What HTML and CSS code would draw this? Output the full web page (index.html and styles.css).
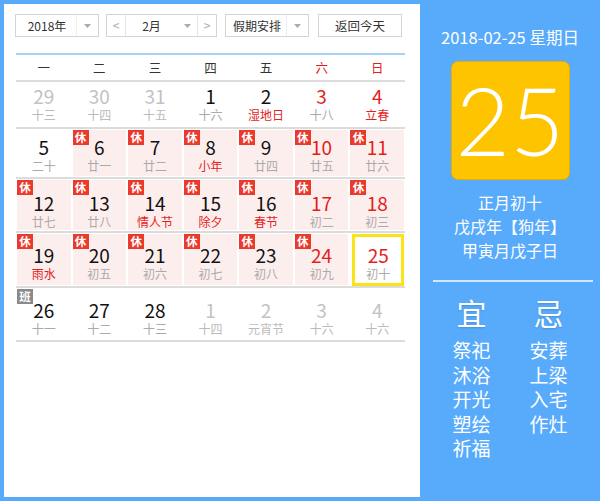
FILE: index.html
```html
<!DOCTYPE html>
<html lang="zh-CN">
<head>
<meta charset="utf-8">
<title>万年历</title>
<link rel="stylesheet" href="styles.css">
</head>
<body>
<div class="app">
  <div class="main">
    <div class="controls">
      <div class="sel sel-year">
        <span class="sel-text">2018年</span>
        <span class="sel-arrow"><svg width="7" height="4" viewBox="0 0 7 4"><path d="M0 0h7L3.5 4z" fill="#aaa"/></svg></span>
      </div>
      <div class="sel sel-month">
        <span class="nav nav-prev">&lt;</span>
        <span class="sel-text">2月</span>
        <span class="sel-arrow"><svg width="7" height="4" viewBox="0 0 7 4"><path d="M0 0h7L3.5 4z" fill="#aaa"/></svg></span>
        <span class="nav nav-next">&gt;</span>
      </div>
      <div class="sel sel-holiday">
        <span class="sel-text">假期安排</span>
        <span class="sel-arrow"><svg width="7" height="4" viewBox="0 0 7 4"><path d="M0 0h7L3.5 4z" fill="#aaa"/></svg></span>
      </div>
      <div class="btn-today">返回今天</div>
    </div>

    <div class="cal">
      <div class="week">
        <span>一</span><span>二</span><span>三</span><span>四</span><span>五</span><span class="wk-red">六</span><span class="wk-red">日</span>
      </div>

      <div class="row r1">
        <div class="cell other"><div class="day"><div class="num">29</div><div class="lunar">十三</div></div></div>
        <div class="cell other"><div class="day"><div class="num">30</div><div class="lunar">十四</div></div></div>
        <div class="cell other"><div class="day"><div class="num">31</div><div class="lunar">十五</div></div></div>
        <div class="cell"><div class="day"><div class="num">1</div><div class="lunar">十六</div></div></div>
        <div class="cell"><div class="day"><div class="num">2</div><div class="lunar fest">湿地日</div></div></div>
        <div class="cell wkend"><div class="day"><div class="num">3</div><div class="lunar">十八</div></div></div>
        <div class="cell wkend"><div class="day"><div class="num">4</div><div class="lunar fest">立春</div></div></div>
      </div>

      <div class="row r2">
        <div class="cell"><div class="day"><div class="num">5</div><div class="lunar">二十</div></div></div>
        <div class="cell rest"><div class="day"><span class="badge">休</span><div class="num">6</div><div class="lunar">廿一</div></div></div>
        <div class="cell rest"><div class="day"><span class="badge">休</span><div class="num">7</div><div class="lunar">廿二</div></div></div>
        <div class="cell rest"><div class="day"><span class="badge">休</span><div class="num">8</div><div class="lunar fest">小年</div></div></div>
        <div class="cell rest"><div class="day"><span class="badge">休</span><div class="num">9</div><div class="lunar">廿四</div></div></div>
        <div class="cell rest wkend"><div class="day"><span class="badge">休</span><div class="num">10</div><div class="lunar">廿五</div></div></div>
        <div class="cell rest wkend"><div class="day"><span class="badge">休</span><div class="num">11</div><div class="lunar">廿六</div></div></div>
      </div>

      <div class="row r3">
        <div class="cell rest"><div class="day"><span class="badge">休</span><div class="num">12</div><div class="lunar">廿七</div></div></div>
        <div class="cell rest"><div class="day"><span class="badge">休</span><div class="num">13</div><div class="lunar">廿八</div></div></div>
        <div class="cell rest"><div class="day"><span class="badge">休</span><div class="num">14</div><div class="lunar fest">情人节</div></div></div>
        <div class="cell rest"><div class="day"><span class="badge">休</span><div class="num">15</div><div class="lunar fest">除夕</div></div></div>
        <div class="cell rest"><div class="day"><span class="badge">休</span><div class="num">16</div><div class="lunar fest">春节</div></div></div>
        <div class="cell rest wkend"><div class="day"><span class="badge">休</span><div class="num">17</div><div class="lunar">初二</div></div></div>
        <div class="cell rest wkend"><div class="day"><span class="badge">休</span><div class="num">18</div><div class="lunar">初三</div></div></div>
      </div>

      <div class="row r4">
        <div class="cell rest"><div class="day"><span class="badge">休</span><div class="num">19</div><div class="lunar fest">雨水</div></div></div>
        <div class="cell rest"><div class="day"><span class="badge">休</span><div class="num">20</div><div class="lunar">初五</div></div></div>
        <div class="cell rest"><div class="day"><span class="badge">休</span><div class="num">21</div><div class="lunar">初六</div></div></div>
        <div class="cell rest"><div class="day"><span class="badge">休</span><div class="num">22</div><div class="lunar">初七</div></div></div>
        <div class="cell rest"><div class="day"><span class="badge">休</span><div class="num">23</div><div class="lunar">初八</div></div></div>
        <div class="cell rest wkend"><div class="day"><span class="badge">休</span><div class="num">24</div><div class="lunar">初九</div></div></div>
        <div class="cell wkend today"><div class="day"><div class="num">25</div><div class="lunar">初十</div></div></div>
      </div>

      <div class="row r5">
        <div class="cell"><div class="day"><span class="badge work">班</span><div class="num">26</div><div class="lunar">十一</div></div></div>
        <div class="cell"><div class="day"><div class="num">27</div><div class="lunar">十二</div></div></div>
        <div class="cell"><div class="day"><div class="num">28</div><div class="lunar">十三</div></div></div>
        <div class="cell other"><div class="day"><div class="num">1</div><div class="lunar">十四</div></div></div>
        <div class="cell other"><div class="day"><div class="num">2</div><div class="lunar">元宵节</div></div></div>
        <div class="cell other"><div class="day"><div class="num">3</div><div class="lunar">十六</div></div></div>
        <div class="cell other"><div class="day"><div class="num">4</div><div class="lunar">十六</div></div></div>
      </div>
    </div>
  </div>

  <div class="side">
    <div class="side-date">2018-02-25 星期日</div>
    <div class="big-day">25</div>
    <div class="side-lunar">
      <div>正月初十</div>
      <div>戊戌年【狗年】</div>
      <div>甲寅月戊子日</div>
    </div>
    <div class="side-divider"></div>
    <div class="yiji">
      <div class="yiji-col">
        <div class="yiji-title">宜</div>
        <div class="yiji-item">祭祀</div>
        <div class="yiji-item">沐浴</div>
        <div class="yiji-item">开光</div>
        <div class="yiji-item">塑绘</div>
        <div class="yiji-item">祈福</div>
      </div>
      <div class="yiji-col">
        <div class="yiji-title">忌</div>
        <div class="yiji-item">安葬</div>
        <div class="yiji-item">上梁</div>
        <div class="yiji-item">入宅</div>
        <div class="yiji-item">作灶</div>
      </div>
    </div>
  </div>
</div>
</body>
</html>
```

FILE: styles.css
```css
* { box-sizing: border-box; }

html, body {
  margin: 0;
  padding: 0;
}

body {
  width: 600px;
  height: 501px;
  background: #58aafb;
  font-family: "Noto Sans CJK SC", "Noto Sans", sans-serif;
  color: #333;
  overflow: hidden;
}

.app {
  display: flex;
  height: 501px;
  padding: 4px 0 4px 4px;
}

.main {
  width: 416px;
  height: 493px;
  background: #fff;
  padding: 10px 0 0 12px;
}

/* controls */
.controls {
  display: flex;
  height: 23px;
  margin-left: -1px;
}

.sel, .btn-today {
  height: 23px;
  border: 1px solid #d4d4d4;
  display: flex;
  align-items: center;
  font-size: 12px;
  color: #333;
  background: #fff;
}

.sel-year { width: 84px; }
.sel-month { width: 111px; margin-left: 7px; }
.sel-holiday { width: 84px; margin-left: 8px; }
.btn-today {
  width: 84px;
  margin-left: 9px;
  justify-content: center;
  font-size: 12.5px;
}

.sel-text {
  flex: 1;
  text-align: center;
  line-height: 21px;
}

.sel-year .sel-text { padding-left: 2px; }
.sel-holiday .sel-text { padding-left: 2px; }

.sel-arrow {
  width: 22px;
  height: 21px;
  display: flex;
  align-items: center;
  justify-content: center;
  border-left: 1px solid #eee;
}

.sel-month .sel-arrow {
  border-left: none;
  width: 20px;
}

.nav {
  width: 19px;
  height: 21px;
  line-height: 20px;
  text-align: center;
  color: #aaa;
  font-size: 12px;
}

.nav-prev { border-right: 1px solid #e6e6e6; }
.nav-next { border-left: 1px solid #e6e6e6; }

/* calendar */
.cal {
  width: 389px;
  margin-top: 16px;
  border-top: 2px solid #a9d1f3;
}

.week {
  display: grid;
  grid-template-columns: repeat(7, 1fr);
  height: 27px;
  border-bottom: 2px solid #dcdcdc;
  font-size: 12.5px;
  line-height: 25px;
  text-align: center;
  color: #333;
}

.wk-red { color: #e41d1d; }

.row {
  display: grid;
  grid-template-columns: repeat(7, 1fr);
  border-bottom: 2px solid #dcdcdc;
}

.r1 { height: 47px; }
.r2 { height: 50px; }
.r3 { height: 54px; }
.r4 { height: 55px; }
.r5 { height: 54px; }

.cell {
  padding: 1px 1px;
}

.day {
  position: relative;
  height: 100%;
  text-align: center;
}

.r1 .day { padding-top: 4px; }
.r2 .day { padding-top: 8px; }
.r3 .day { padding-top: 14px; }
.r4 .day { padding-top: 12px; }
.r5 .day { padding-top: 12px; }

.rest .day { background: #fdeeee; }

.num {
  font-size: 19px;
  line-height: 18px;
  height: 18px;
  color: #111;
}

.lunar {
  font-size: 12px;
  line-height: 14px;
  margin-top: 3px;
  color: #aaa;
}

.lunar.fest { color: #e41d1d; }

.wkend .num { color: #e41d1d; }

.other .num { color: #c2c2c2; }
.other .lunar { color: #bbb; }

.badge {
  position: absolute;
  left: 0;
  top: 0;
  width: 16px;
  height: 15px;
  background: #ea3a2d;
  color: #fff;
  font-size: 11.5px;
  line-height: 15px;
  text-align: center;
  font-weight: bold;
}

.badge.work { background: #8a8a8a; }

.today .day {
  border: 3px solid #fbe31a;
  margin-left: 2px;
  height: calc(100% + 1px);
  padding-top: 9px !important;
}

/* side panel */
.side {
  width: 180px;
  color: #fff;
  text-align: center;
  padding-top: 23px;
}

.side-date {
  font-size: 16.5px;
  line-height: 20px;
}

.big-day {
  width: 119px;
  height: 119px;
  margin: 14px auto 0;
  background: #ffc400;
  border: 1px solid #e2ae06;
  border-radius: 7px;
  font-family: "Lato", "Open Sans", sans-serif;
  font-weight: 300;
  font-size: 94px;
  line-height: 115px;
  color: #fff;
}

.side-lunar {
  margin-top: 10px;
  font-size: 16px;
  line-height: 24px;
}

.side-divider {
  width: 160px;
  height: 2px;
  margin: 18px 0 0 13px;
  background: #d2e7fd;
}

.yiji {
  display: flex;
  justify-content: center;
  gap: 17px;
  margin-top: 14px;
}

.yiji-col {
  width: 60px;
}

.yiji-title {
  font-size: 30px;
  line-height: 32px;
  margin-bottom: 10px;
  text-shadow: 0 1px 2px rgba(0, 0, 0, 0.15);
}

.yiji-item {
  font-size: 19px;
  line-height: 24.5px;
}
```
